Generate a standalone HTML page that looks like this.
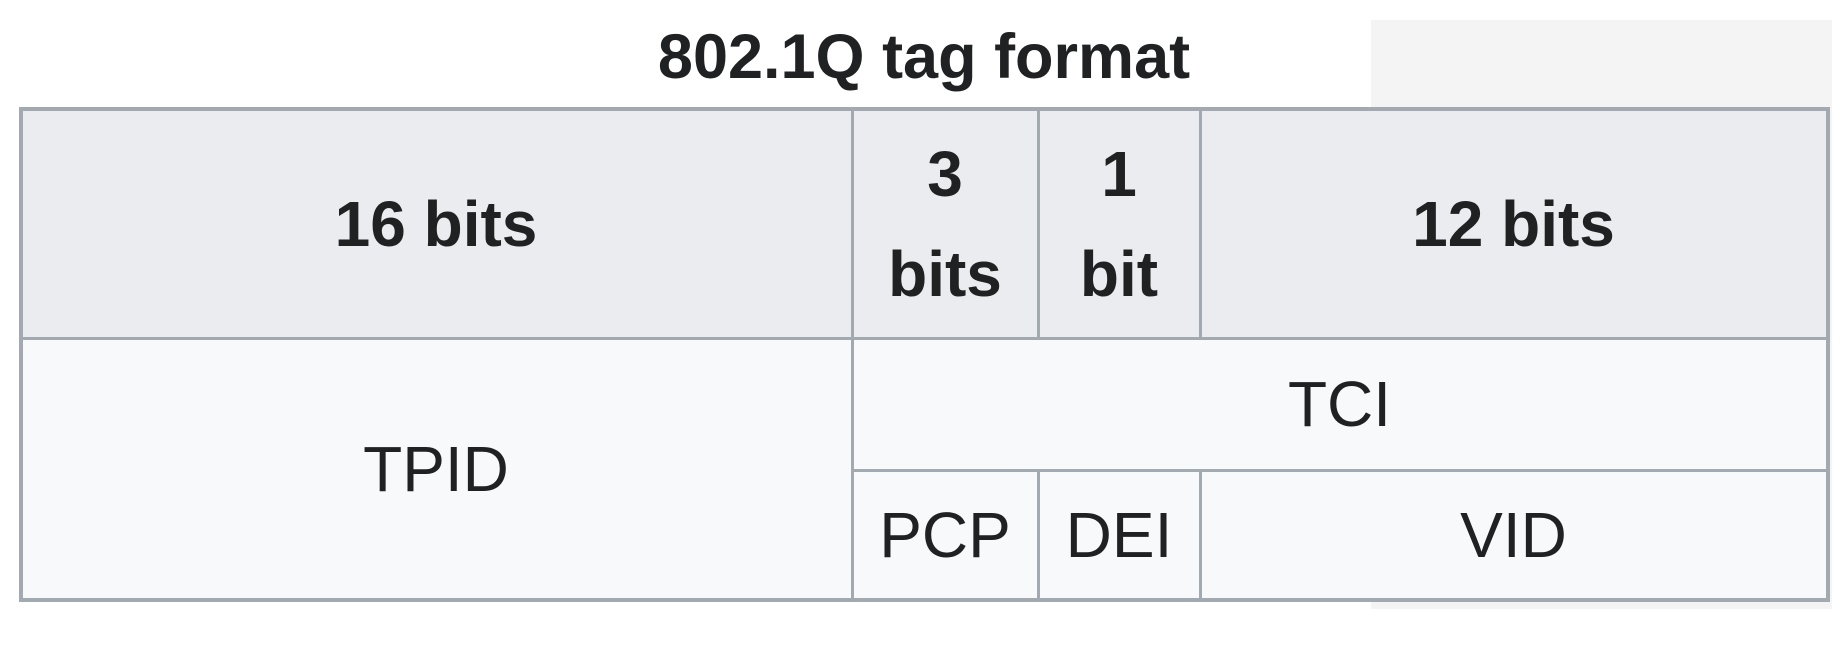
<!DOCTYPE html>
<html><head><meta charset="utf-8"><style>
html,body{margin:0;padding:0;width:1846px;height:656px;background:#fff;overflow:hidden;font-family:"Liberation Sans",Arial,sans-serif;color:#202122}
.a{position:absolute;box-sizing:border-box}
.c{position:absolute;box-sizing:border-box;display:flex;align-items:center;justify-content:center;text-align:center;font-size:64px;line-height:100px}
.h{background:#eaecf0;font-weight:bold}
.b{background:#f8f9fa}
.v{position:absolute;background:#a2a9b1}
</style></head><body>
<div class="a" style="left:1371px;top:20px;width:461px;height:589px;background:#f4f4f4"></div>
<div class="a" style="left:0;top:20px;text-align:center;font-weight:bold;font-size:63px;line-height:74px;width:1848px;">802.1Q tag format</div>
<div class="c h" style="left:20px;top:109px;width:832px;height:229px">16 bits</div>
<div class="c h" style="left:852px;top:109px;width:186px;height:229px">3<br>bits</div>
<div class="c h" style="left:1038px;top:109px;width:162px;height:229px">1<br>bit</div>
<div class="c h" style="left:1200px;top:109px;width:627px;height:229px">12 bits</div>
<div class="c b" style="left:20px;top:338px;width:832px;height:262px">TPID</div>
<div class="c b" style="left:852px;top:338px;width:975px;height:132px">TCI</div>
<div class="c b" style="left:852px;top:470px;width:186px;height:130px">PCP</div>
<div class="c b" style="left:1038px;top:470px;width:162px;height:130px">DEI</div>
<div class="c b" style="left:1200px;top:470px;width:627px;height:130px">VID</div>
<div class="v" style="left:19px;top:107px;width:1811px;height:4px"></div>
<div class="v" style="left:19px;top:598px;width:1811px;height:4px"></div>
<div class="v" style="left:19px;top:107px;width:4px;height:495px"></div>
<div class="v" style="left:1826px;top:107px;width:4px;height:495px"></div>
<div class="v" style="left:19px;top:337px;width:1811px;height:3px"></div>
<div class="v" style="left:851px;top:469px;width:979px;height:3px"></div>
<div class="v" style="left:851px;top:107px;width:3px;height:495px"></div>
<div class="v" style="left:1037px;top:107px;width:3px;height:231px"></div>
<div class="v" style="left:1037px;top:469px;width:3px;height:133px"></div>
<div class="v" style="left:1199px;top:107px;width:3px;height:231px"></div>
<div class="v" style="left:1199px;top:469px;width:3px;height:133px"></div>
</body></html>
